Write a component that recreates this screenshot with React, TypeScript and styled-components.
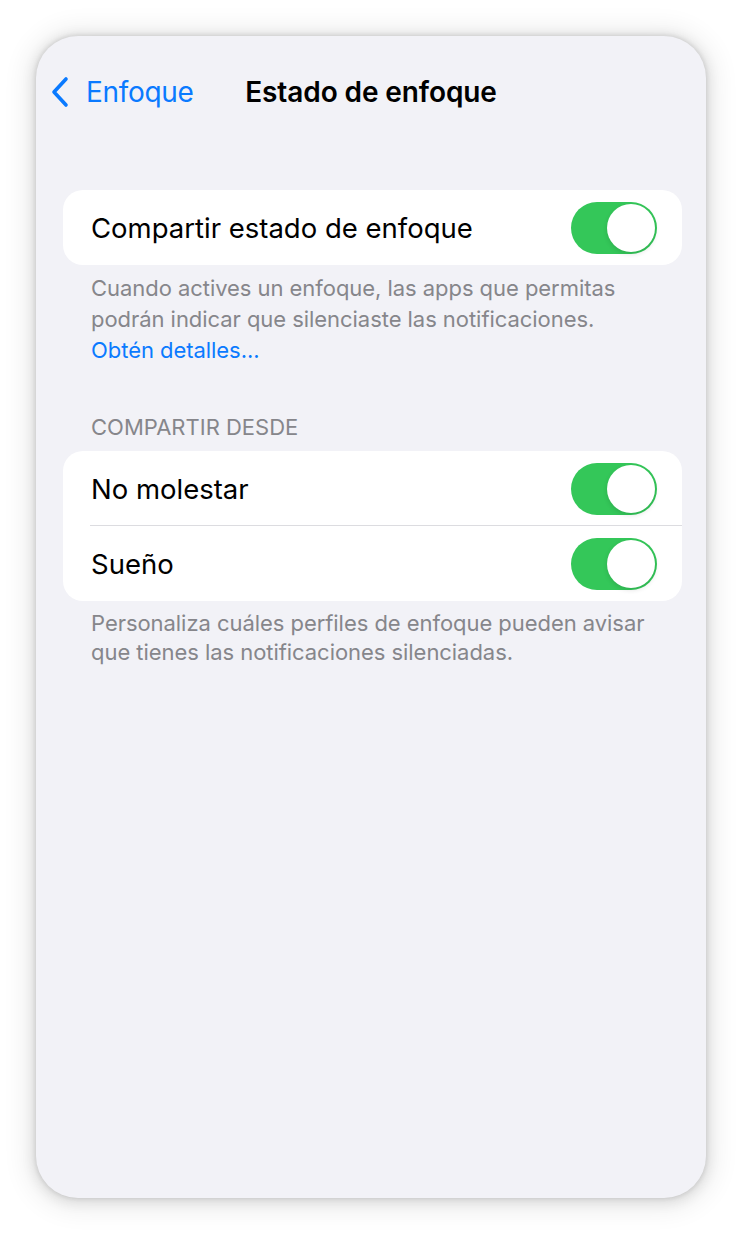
import React from 'react';
import styled, { createGlobalStyle } from 'styled-components';

const GlobalStyle = createGlobalStyle`
  body {
    margin: 0;
    background: #fff;
    font-family: Inter, "Noto Sans", sans-serif;
    -webkit-font-smoothing: antialiased;
  }
`;

const Page = styled.div`
  padding: 36px;
  width: 742px;
  box-sizing: border-box;
`;

const Phone = styled.div`
  width: 670px;
  height: 1162px;
  border-radius: 42px;
  background: #f2f2f7;
  box-shadow: 0 0 4px 1px rgba(0, 0, 0, 0.1), 0 2px 12px 4px rgba(0, 0, 0, 0.08),
    0 2px 26px 10px rgba(0, 0, 0, 0.07);
  overflow: hidden;
  display: flex;
  flex-direction: column;
`;

const NavBar = styled.div`
  display: grid;
  grid-template-columns: 1fr auto 1fr;
  align-items: center;
  height: 44px;
  margin-top: 34px;
  padding: 0 14px;
`;

const Back = styled.div`
  display: flex;
  align-items: center;
  gap: 16px;
  color: #0a7aff;
  font-size: 28px;
  letter-spacing: -0.3px;
`;

const Title = styled.div`
  font-size: 28px;
  font-weight: 600;
  color: #000;
  letter-spacing: -0.1px;
`;

const Content = styled.div`
  margin: 76px 24px 0 27px;
  display: flex;
  flex-direction: column;
`;

const Card = styled.div`
  background: #fff;
  border-radius: 20px;
  overflow: hidden;
`;

const Row = styled.div<{ $divider?: boolean }>`
  position: relative;
  height: 75px;
  display: flex;
  align-items: center;
  justify-content: space-between;
  padding: 0 25px 0 28px;
  font-size: 27.5px;
  color: #000;
  &::after {
    content: '';
    display: ${(p) => (p.$divider ? 'block' : 'none')};
    position: absolute;
    left: 27px;
    right: 0;
    bottom: 0;
    height: 1px;
    background: #dcdce0;
  }
`;

const Toggle = styled.div`
  width: 86px;
  height: 52px;
  border-radius: 26px;
  background: #34c759;
  display: flex;
  align-items: center;
  justify-content: flex-end;
  padding: 0 2px;
  box-sizing: border-box;
`;

const Knob = styled.div`
  width: 48px;
  height: 48px;
  border-radius: 50%;
  background: #fff;
  box-shadow: 0 2px 5px rgba(0, 0, 0, 0.12);
`;

const Footer = styled.div<{ $lh: number }>`
  margin-top: 8px;
  padding: 0 20px 0 28px;
  font-size: 22px;
  line-height: ${(p) => p.$lh}px;
  color: #86868b;
  letter-spacing: -0.05px;
`;

const Link = styled.span`
  color: #0a7aff;
`;

const SectionHeader = styled.div`
  margin: 47px 0 10px;
  padding-left: 28px;
  font-size: 22px;
  line-height: 28px;
  color: #86868b;
`;

const Chevron = () => (
  <svg width="20" height="32" viewBox="0 0 20 32" fill="none">
    <path d="M16 3 L4 16 L16 29" stroke="#0a7aff" strokeWidth="3.6" strokeLinecap="round" strokeLinejoin="round" />
  </svg>
);

const Switch = () => (
  <Toggle>
    <Knob />
  </Toggle>
);

export default function App() {
  return (
    <Page>
      <GlobalStyle />
      <Phone>
        <NavBar>
          <Back>
            <Chevron />
            Enfoque
          </Back>
          <Title>Estado de enfoque</Title>
          <div />
        </NavBar>
        <Content>
          <Card>
            <Row>
              Compartir estado de enfoque
              <Switch />
            </Row>
          </Card>
          <Footer $lh={31}>
            Cuando actives un enfoque, las apps que permitas podrán indicar que silenciaste las notificaciones.
            <br />
            <Link>Obtén detalles...</Link>
          </Footer>
          <SectionHeader>COMPARTIR DESDE</SectionHeader>
          <Card>
            <Row $divider>
              No molestar
              <Switch />
            </Row>
            <Row>
              Sueño
              <Switch />
            </Row>
          </Card>
          <Footer $lh={29}>
            Personaliza cuáles perfiles de enfoque pueden avisar que tienes las notificaciones silenciadas.
          </Footer>
        </Content>
      </Phone>
    </Page>
  );
}
